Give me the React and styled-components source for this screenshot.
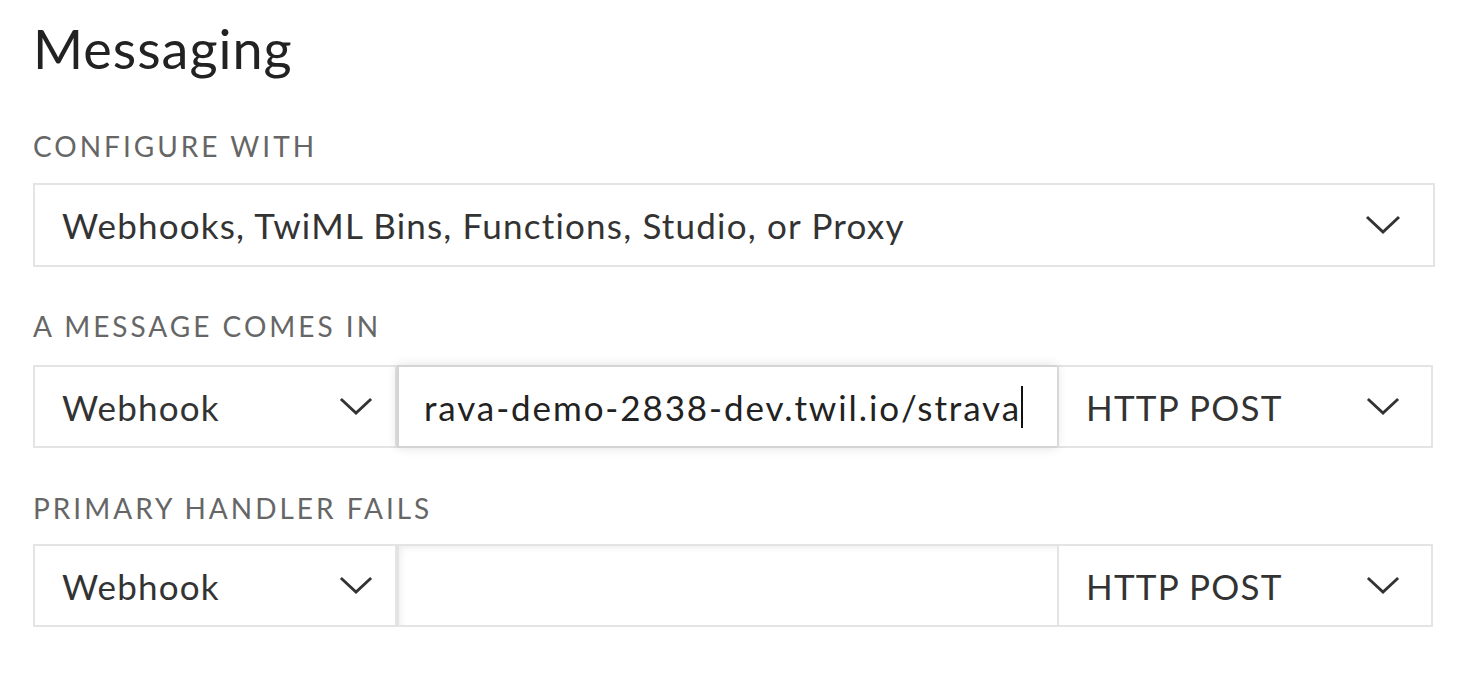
import React from "react";
import styled, { createGlobalStyle } from "styled-components";

const GlobalStyle = createGlobalStyle`
  html, body {
    margin: 0;
    padding: 0;
    background: #fff;
  }
  body {
    font-family: Lato, "Open Sans", sans-serif;
    color: #222;
  }
`;

const Page = styled.div`
  padding: 11px 33px 0 33px;
  width: 1402px;
`;

const Title = styled.h1`
  font-size: 54px;
  font-weight: 400;
  color: #222;
  margin: 0 0 42px;
  line-height: 76px;
  letter-spacing: 1px;
`;

const Field = styled.div`
  margin-bottom: ${(p) => p.gap || "44px"};
`;

const Label = styled.div`
  font-size: 28px;
  line-height: 34px;
  letter-spacing: 3px;
  color: #666;
  text-transform: uppercase;
  margin-bottom: ${(p) => p.gap || "16px"};
`;

const Row = styled.div`
  display: flex;
  width: ${(p) => p.width || "1400px"};
`;

const Select = styled.div`
  box-sizing: border-box;
  display: flex;
  align-items: center;
  justify-content: space-between;
  height: ${(p) => p.height || "83px"};
  width: ${(p) => p.width};
  flex: ${(p) => (p.width ? "none" : "1")};
  border: 2px solid #e4e4e4;
  background: #fff;
  padding: 0 ${(p) => p.padRight || "32px"} 0 27px;
  font-size: 35px;
  letter-spacing: 1.2px;
  color: #333;
  & + & {
    border-left: none;
  }
`;

const Chevron = ({ w = 35 }) => (
  <svg width={w} height={w / 2 + 2} viewBox="0 0 36 20" fill="none">
    <path d="M2 2 L18 17 L34 2" stroke="#333" strokeWidth="3" />
  </svg>
);

const UrlInput = styled.div`
  box-sizing: border-box;
  width: 660px;
  flex: none;
  height: 83px;
  display: flex;
  align-items: center;
  justify-content: flex-end;
  white-space: nowrap;
  padding: 0 34px 0 22px;
  font-size: 35px;
  letter-spacing: 1.9px;
  color: #222;
  background: #fff;
  border: 2px solid ${(p) => (p.focused ? "#d4d4d4" : "#e4e4e4")};
  border-right: none;
  box-shadow: ${(p) =>
    p.focused
      ? "0 0 10px rgba(0,0,0,0.12)"
      : "inset 4px 4px 6px -2px rgba(0,0,0,0.07)"};
  z-index: ${(p) => (p.focused ? 1 : 0)};
`;

const Cursor = styled.span`
  display: inline-block;
  width: 2px;
  height: 42px;
  background: #111;
  margin-left: 0;
`;

export default function App() {
  return (
    <>
      <GlobalStyle />
      <Page>
        <Title>Messaging</Title>
        <Field gap="42px">
          <Label gap="20px">Configure with</Label>
          <Row width="1402px">
            <Select padRight="32px" height="84px">
              <span>Webhooks, TwiML Bins, Functions, Studio, or Proxy</span>
              <Chevron w={36} />
            </Select>
          </Row>
        </Field>
        <Field gap="43px">
          <Label gap="22px">A message comes in</Label>
          <Row>
            <Select width="364px" padRight="22px">
              <span>Webhook</span>
              <Chevron w={34} />
            </Select>
            <UrlInput focused>
              <span>rava-demo-2838-dev.twil.io/strava</span>
              <Cursor />
            </UrlInput>
            <Select padRight="31px">
              <span>HTTP POST</span>
              <Chevron w={34} />
            </Select>
          </Row>
        </Field>
        <Field>
          <Label gap="19px">Primary handler fails</Label>
          <Row>
            <Select width="364px" padRight="22px">
              <span>Webhook</span>
              <Chevron w={34} />
            </Select>
            <UrlInput />
            <Select padRight="31px">
              <span>HTTP POST</span>
              <Chevron w={34} />
            </Select>
          </Row>
        </Field>
      </Page>
    </>
  );
}
